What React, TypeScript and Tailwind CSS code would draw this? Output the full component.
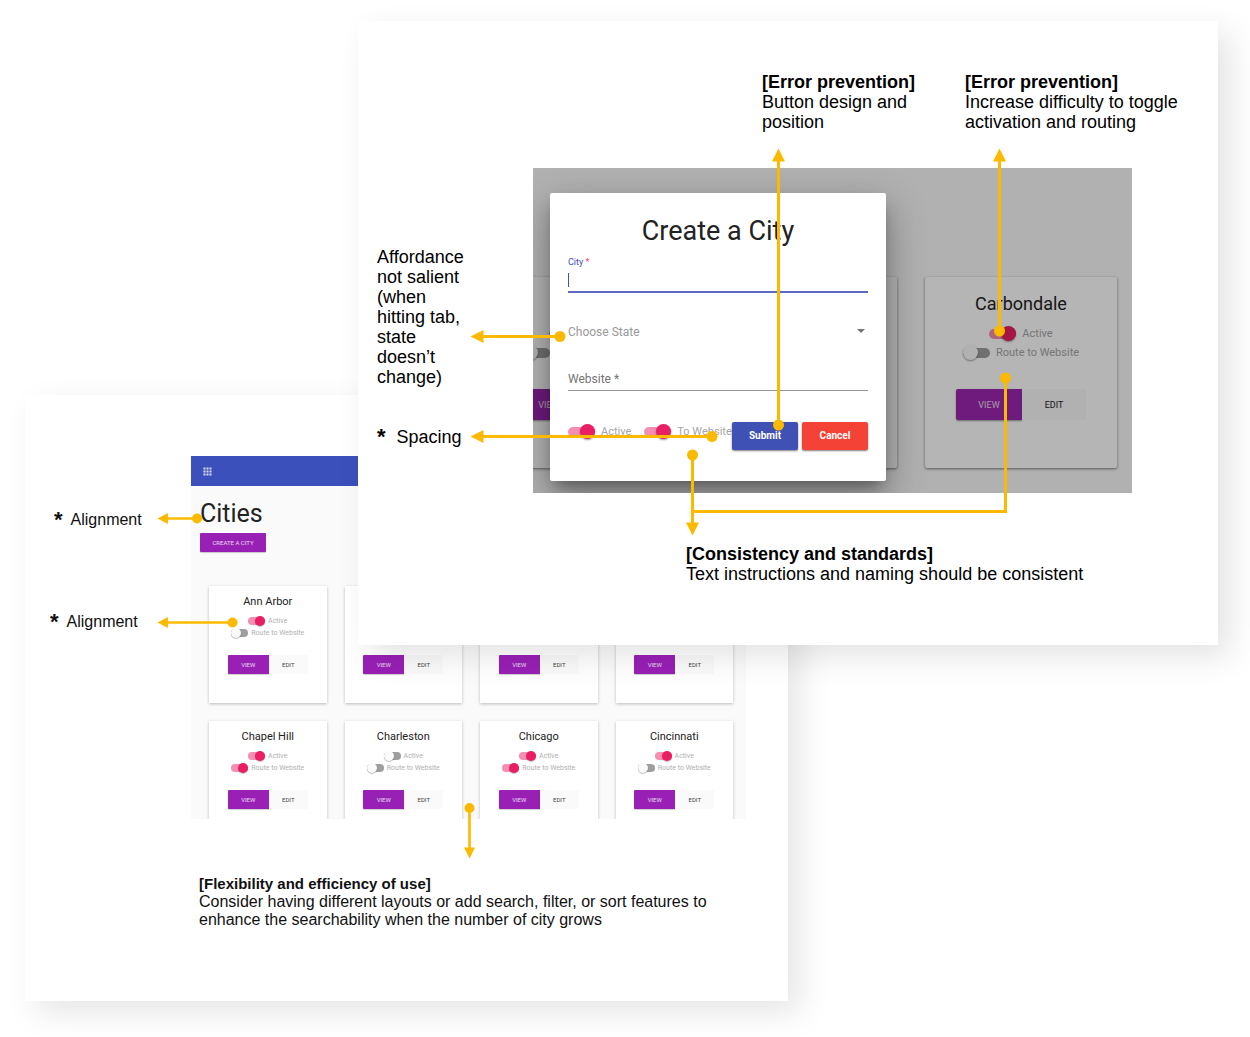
import { useId, type ReactNode } from "react";

type City = { name?: string; active: boolean; routed: boolean };

const smallCities: City[] = [
  { name: "Ann Arbor", active: true, routed: false },
  { active: true, routed: false },
  { active: true, routed: false },
  { active: true, routed: false },
  { name: "Chapel Hill", active: true, routed: true },
  { name: "Charleston", active: false, routed: false },
  { name: "Chicago", active: true, routed: true },
  { name: "Cincinnati", active: true, routed: false },
];

const largeCities: City[] = [
  { active: true, routed: false },
  { active: true, routed: false },
  { name: "Carbondale", active: true, routed: false },
];

const largeSwitch =
  "relative h-[15px] w-[27px] shrink-0 appearance-none before:absolute before:inset-x-0 before:top-[3px] before:h-[10px] before:rounded-full before:bg-[#9e9e9e] checked:before:bg-[#f48fb1] after:absolute after:left-0 after:top-0 after:size-[15px] after:rounded-full after:bg-[#fafafa] after:shadow-[0_1px_2px_rgba(0,0,0,0.4)] checked:after:left-[12px] checked:after:bg-[#e91e63]";
const smallSwitch =
  "relative h-[10px] w-[17px] shrink-0 appearance-none before:absolute before:inset-x-0 before:top-[1px] before:h-[8px] before:rounded-full before:bg-[#9e9e9e] checked:before:bg-[#f48fb1] after:absolute after:left-0 after:top-0 after:size-[10px] after:rounded-full after:bg-[#fafafa] after:shadow-[0_1px_1px_rgba(0,0,0,0.25)] checked:after:left-[7px] checked:after:bg-[#e91e63]";

function Switch({ label, on, small }: { label: string; on: boolean; small?: boolean }) {
  const id = useId();
  return (
    <div
      className={
        small
          ? "flex h-[12px] items-center gap-[3px] text-[7px] text-[#b0b0b0]"
          : "flex h-[19px] items-center gap-[6px] text-[11px] text-[#a6a6a6]"
      }
    >
      <input id={id} type="checkbox" role="switch" defaultChecked={on} className={small ? smallSwitch : largeSwitch} />
      <label htmlFor={id} className="whitespace-nowrap">
        {label}
      </label>
    </div>
  );
}

function SmallCard({ city }: { city: City }) {
  return (
    <article className="flex h-[117px] flex-col items-center bg-white pt-[8px] shadow-[0_1px_3px_rgba(0,0,0,0.25)]">
      <h3 className="h-[16px] text-[11px] leading-[16px] text-[#222]">{city.name}</h3>
      <div className="mt-[5px] flex flex-col items-center">
        <Switch small label="Active" on={city.active} />
        <Switch small label="Route to Website" on={city.routed} />
      </div>
      <div className="mt-[16px] flex h-[19px] text-[6px]">
        <button className="w-[41px] rounded-l-[1px] bg-[#9820b5] text-white/80 shadow-[0_1px_1px_rgba(0,0,0,0.2)]">VIEW</button>
        <button className="w-[39px] bg-[#fafafa] text-[#444]">EDIT</button>
      </div>
    </article>
  );
}

function LargeCard({ city }: { city: City }) {
  return (
    <article className="flex h-[191px] w-[192px] shrink-0 flex-col items-center rounded-[2px] bg-white pt-[15px] shadow-[0_1px_3px_rgba(0,0,0,0.5)]">
      <h3 className="h-[24px] text-[18px] leading-[24px] text-[#222]">{city.name}</h3>
      <div className="mt-[8px] flex flex-col items-center">
        <Switch label="Active" on={city.active} />
        <Switch label="Route to Website" on={city.routed} />
      </div>
      <div className="mt-[27px] flex h-[31px] text-[9px]">
        <button className="w-[66px] rounded-l-[2px] bg-[#9c27b0] text-white/80 shadow-[0_1px_2px_rgba(0,0,0,0.4)]">VIEW</button>
        <button className="w-[64px] bg-[#fafafa] text-[#222]">EDIT</button>
      </div>
    </article>
  );
}

function Note({
  title,
  children,
  className,
  titleClassName = "font-bold",
}: {
  title: string;
  children: ReactNode;
  className: string;
  titleClassName?: string;
}) {
  return (
    <div className={className}>
      <h2 className={titleClassName}>{title}</h2>
      <p>{children}</p>
    </div>
  );
}

function StarNote({ children, className }: { children: ReactNode; className: string }) {
  return (
    <p className={className}>
      <span aria-hidden="true" className="text-[22px] font-bold">
        *
      </span>
      <span>{children}</span>
    </p>
  );
}

function CreateCityDialog() {
  return (
    <form
      onSubmit={(e) => e.preventDefault()}
      aria-label="Create a City"
      className="absolute left-[17px] top-[25px] h-[288px] w-[336px] rounded-[2px] bg-white px-[18px] pt-[20px] shadow-[0_9px_14px_-5px_rgba(0,0,0,0.35),0_15px_38px_3px_rgba(0,0,0,0.3)]"
    >
      <h2 className="text-center text-[27px] leading-[36px] text-[#222]">Create a City</h2>
      <div className="relative mt-[8px] border-b-2 border-[#5c6bc0]">
        <label htmlFor="city" className="block text-[9px] leading-[10px] text-[#3f51b5]">
          City <span className="text-[#ff4081]">*</span>
        </label>
        <input id="city" required className="block h-[24px] w-full text-[12px] outline-none" />
        <span className="absolute bottom-[4px] left-0 h-[14px] w-px bg-[#3f51b5]" />
      </div>
      <div className="relative mt-[29px]">
        <select
          aria-label="Choose State"
          className="block h-[18px] w-full appearance-none text-[12px] text-[#999] outline-none"
        >
          <option>Choose State</option>
        </select>
        <svg
          viewBox="0 0 8 4"
          className="pointer-events-none absolute right-[3px] top-[7px] h-[4px] w-[8px] fill-[#757575]"
        >
          <path d="M0 0h8L4 4z" />
        </svg>
      </div>
      <input
        required
        aria-label="Website"
        placeholder="Website *"
        className="mt-[27px] block h-[24px] w-full border-b border-[#949494] text-[12px] outline-none placeholder:text-[#757575]"
      />
      <div className="mt-[31px] flex h-[28px] items-start gap-[13px]">
        <Switch label="Active" on />
        <Switch label="To Website" on />
        <div className="-ml-[13px] flex flex-1 justify-end gap-[4px] text-[10px] font-bold text-white">
          <button
            type="submit"
            className="h-[28px] w-[66px] shrink-0 rounded-[2px] bg-[#3f51b5] shadow-[0_1px_2px_rgba(0,0,0,0.5)]"
          >
            Submit
          </button>
          <button
            type="button"
            className="h-[28px] w-[66px] shrink-0 rounded-[2px] bg-[#f44336] shadow-[0_1px_2px_rgba(0,0,0,0.5)]"
          >
            Cancel
          </button>
        </div>
      </div>
    </form>
  );
}

function CitiesSlide() {
  return (
    <section className="relative col-start-1 col-end-3 row-start-2 row-end-4 bg-white pt-[61px] pb-[72px] font-['Liberation_Sans',Arial,sans-serif] text-[16px] leading-[18px] text-[#111] shadow-[12px_12px_30px_rgba(0,0,0,0.1)]">
      <div className="flex">
        <div className="w-[166px] shrink-0 pt-[55px]">
          <StarNote className="flex h-[18px] gap-[8px] pl-[29px]">Alignment</StarNote>
          <StarNote className="mt-[84px] flex h-[18px] gap-[8px] pl-[25px]">Alignment</StarNote>
        </div>
        <div className="mr-[42px] h-[363px] flex-1 overflow-hidden bg-[#fafafa] font-[Roboto,sans-serif]">
          <header className="flex h-[30px] items-center bg-[#3c50bb] pl-[12px]">
            <svg viewBox="0 0 9 9" className="size-[9px] fill-white/80" role="img" aria-label="Menu">
              <path d="M.5.5h2v2h-2zM3.5.5h2v2h-2zM6.5.5h2v2h-2zM.5 3.5h2v2h-2zM3.5 3.5h2v2h-2zM6.5 3.5h2v2h-2zM.5 6.5h2v2h-2zM3.5 6.5h2v2h-2zM6.5 6.5h2v2h-2z" />
            </svg>
          </header>
          <div className="pl-[9px] pt-[12px]">
            <h1 className="text-[25px] leading-[32px] text-[#222]">Cities</h1>
            <button className="mt-[3px] block h-[19px] w-[66px] rounded-[1px] bg-[#9820b5] text-[6px] text-white/80 shadow-[0_1px_1px_rgba(0,0,0,0.2)]">
              CREATE A CITY
            </button>
          </div>
          <div className="mt-[34px] grid grid-cols-4 gap-[18px] pl-[18px] pr-[13px]">
            {smallCities.map((city, i) => (
              <SmallCard key={i} city={city} />
            ))}
          </div>
        </div>
      </div>
      <Note
        title="[Flexibility and efficiency of use]"
        titleClassName="text-[15px] leading-[18px] font-bold"
        className="ml-[174px] mt-[56px] w-[520px]"
      >
        Consider having different layouts or add search, filter, or sort features to enhance the searchability when the
        number of city grows
      </Note>
      <svg
        viewBox="25 395 763 606"
        className="pointer-events-none absolute left-0 top-0 h-[606px] w-[763px] fill-[#fbba00] stroke-[#fbba00]"
        aria-hidden="true"
      >
        <path strokeWidth="2.6" fill="none" d="M166 518.500H197M166 622.500H232M469.500 808V849" />
        <path
          stroke="none"
          d="M157.500 518.500l10.500-5.500v11zM157.500 622.500l10.500-5.500v11zM469.500 858.500l-5.500-11h11z"
        />
        <g stroke="none">
          <circle cx="197" cy="518.500" r="5" />
          <circle cx="232.500" cy="622.500" r="5" />
          <circle cx="469.500" cy="808" r="5" />
        </g>
      </svg>
    </section>
  );
}

function DialogSlide() {
  return (
    <section className="relative z-10 col-start-2 col-end-4 row-start-1 row-end-3 bg-white pb-[61px] pt-[51px] font-['Liberation_Sans',Arial,sans-serif] text-[18px] leading-[20px] text-black shadow-[12px_12px_30px_rgba(0,0,0,0.11)]">
      <div className="flex pl-[404px]">
        <Note title="[Error prevention]" className="w-[203px] shrink-0 pr-[40px]">
          Button design and position
        </Note>
        <Note title="[Error prevention]" className="w-[230px] shrink-0">
          Increase difficulty to toggle activation and routing
        </Note>
      </div>
      <div className="mt-[36px] flex">
        <div className="w-[175px] shrink-0 pl-[19px] pt-[79px]">
          <p className="w-[92px]">Affordance not salient (when hitting tab, state doesn’t change)</p>
          <StarNote className="mt-[40px] flex h-[20px] gap-[11px]">Spacing</StarNote>
        </div>
        <div className="relative h-[325px] w-[599px] overflow-hidden bg-[#fafafa] font-[Roboto,sans-serif]">
          <div className="flex justify-end gap-[28px] pr-[15px] pt-[109px]">
            {largeCities.map((city, i) => (
              <LargeCard key={i} city={city} />
            ))}
          </div>
          <div className="absolute inset-0 bg-black/29" />
          <CreateCityDialog />
        </div>
      </div>
      <Note title="[Consistency and standards]" className="mt-[51px] pl-[328px]">
        Text instructions and naming should be consistent
      </Note>
      <svg
        viewBox="358 21 860 624"
        className="pointer-events-none absolute left-0 top-0 h-[624px] w-[860px] fill-[#fbba00] stroke-[#fbba00]"
        aria-hidden="true"
      >
        <path
          strokeWidth="3"
          fill="none"
          d="M778.500 425V159M999.500 331V159M560 336.500H481M712 436.500H481M692.500 455V525M692.500 511.500H1005.500V378"
        />
        <path
          stroke="none"
          d="M778.500 148.500l6.500 13h-13zM999.500 148.500l6.500 13h-13zM470.500 336.500l13-6.500v13zM470.500 436.500l13-6.500v13zM692.500 535.500l-6.500-13h13z"
        />
        <g stroke="none">
          <circle cx="778.500" cy="425" r="5.500" />
          <circle cx="999.500" cy="331" r="5.500" />
          <circle cx="560" cy="336.500" r="5.500" />
          <circle cx="712" cy="436.500" r="5.500" />
          <circle cx="692.500" cy="455" r="5.500" />
          <circle cx="1005.500" cy="378" r="5.500" />
        </g>
      </svg>
    </section>
  );
}

export default function App() {
  return (
    <main className="grid min-h-screen grid-cols-[333fr_430fr_430fr] grid-rows-[374px_250px_auto] content-start overflow-hidden bg-white pb-[36px] pl-[25px] pr-[32px] pt-[21px]">
      <CitiesSlide />
      <DialogSlide />
    </main>
  );
}
